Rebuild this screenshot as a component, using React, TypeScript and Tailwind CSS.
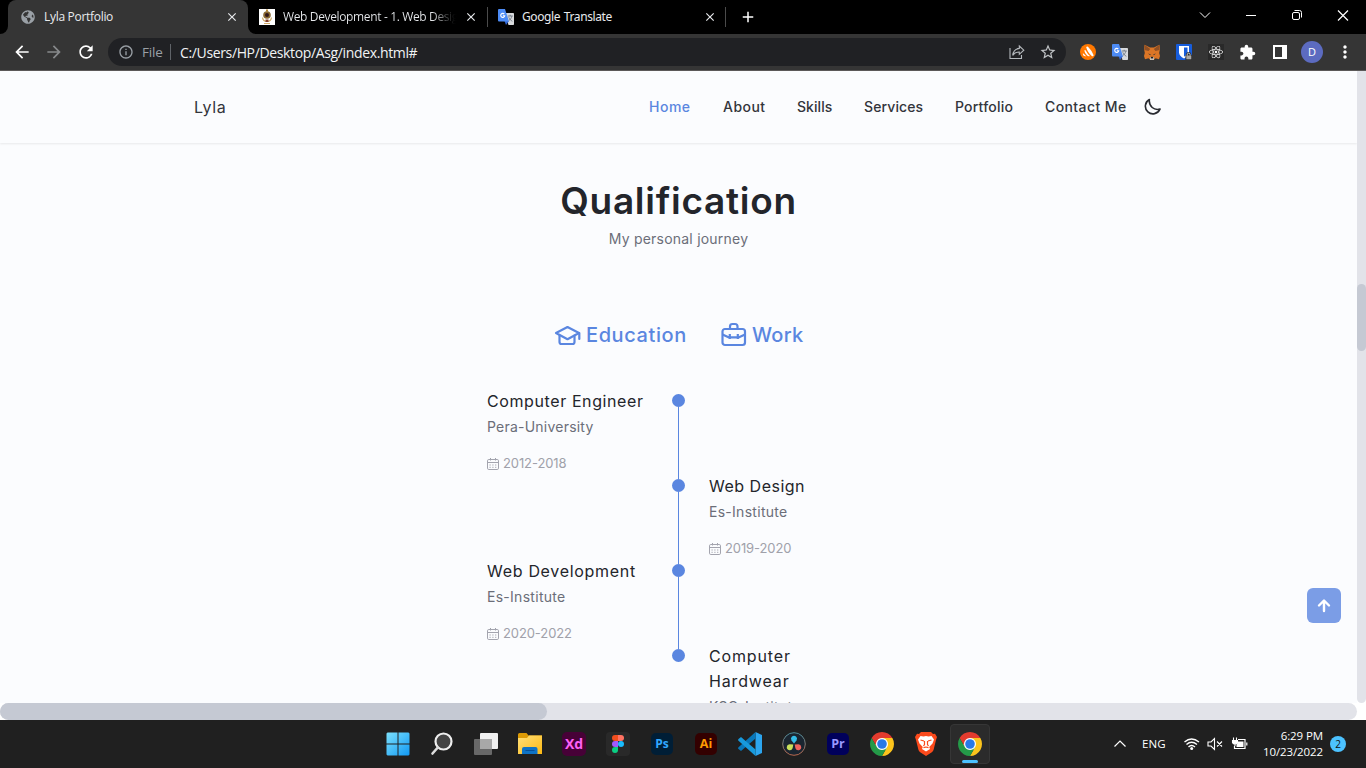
import React from "react";
import { FaGlobeAmericas, FaReact } from "react-icons/fa";
import { MdExtension, MdStarBorder, MdMoreVert, MdClose, MdAdd, MdArrowBack, MdArrowForward, MdRefresh, MdInfoOutline } from "react-icons/md";

function Translate() {
  return (
    <svg width="16" height="16" viewBox="0 0 16 16" className="shrink-0">
      <path d="M7 4h8.2q.8 0 .8.8v10.4q0 .8-.8.8H10.5z" fill="#d8dadd" />
      <path d="M8 16l3-4H6.500z" fill="#3367d6" />
      <path d="M1 0h6l4 12.5H1q-1 0-1-1V1q0-1 1-1z" fill="#4c8bf5" />
      <path d="M9.8 7h5M12.2 5.8V7M13.8 7.2c-.4 2-1.6 3.3-3 4.4M10.8 8.3c.7 1.6 1.8 2.9 3.5 4" stroke="#6c7480" strokeWidth=".9" fill="none" />
      <path d="M6.3 5.1a2 2 0 1 0 .4 1.7H4.9" stroke="#fff" strokeWidth="1.1" fill="none" />
    </svg>
  );
}

function Chrome() {
  return (
    <svg width="24" height="24" viewBox="0 0 48 48" className="shrink-0">
      <circle cx="24" cy="24" r="14" fill="#fff" />
      <path d="M24 12H44.78A24 24 0 0 0 3.22 12L13.61 30A12 12 0 0 1 24 12z" fill="#e33b2e" />
      <path d="M34.39 30L24 48A24 24 0 0 0 44.78 12H24A12 12 0 0 1 34.39 30z" fill="#fcc41c" />
      <path d="M13.61 30L3.22 12A24 24 0 0 0 24 48L34.39 30A12 12 0 0 1 13.61 30z" fill="#249a48" />
      <circle cx="24" cy="24" r="9.6" fill="#2979e8" />
    </svg>
  );
}

function Crest() {
  return (
    <svg width="16" height="16" viewBox="0 0 16 16" className="shrink-0">
      <path d="M0 0h16v16H0z" fill="#fff" />
      <path d="M7 .5h2v2H7z" fill="#b98a35" />
      <circle cx="8" cy="6" r="3.8" fill="#8a6a33" />
      <circle cx="8" cy="6" r="2" fill="#32181a" />
      <path d="M3.500 8.500q.5 4 4.500 4t4.500-4M5 14.500h6" stroke="#d0ab68" strokeWidth="1.200" fill="none" />
      <path d="M6.500 10.500h3v2.500h-3z" fill="#843f2c" />
    </svg>
  );
}

function TabBar() {
  return (
    <div className="flex h-[34px] bg-black text-[12px] text-[#e8eaed]">
      <div className="flex w-2 items-end bg-[#353535]"><div className="h-full w-full rounded-br-lg bg-black" /></div>
      <div className="flex w-[240px] items-center rounded-t-lg bg-[#353535] pl-3 pr-[9px]">
        <FaGlobeAmericas size={14} className="ml-px text-[#9aa0a6]" />
        <span className="ml-[9px] w-[180px] whitespace-nowrap tracking-[-0.3px]">Lyla Portfolio</span>
        <MdClose size={14} className="ml-auto" />
      </div>
      <div className="flex w-[239px] items-center bg-[#353535]">
        <div className="flex h-full w-full items-center rounded-bl-lg bg-black pl-[11px] pr-[9px]">
          <Crest />
          <span className="ml-2 w-[175px] overflow-hidden whitespace-nowrap bg-linear-to-r from-[#e8eaed] from-85% to-black bg-clip-text tracking-[-0.36px] text-transparent">Web Development - 1. Web Desig</span>
          <MdClose size={14} className="ml-auto" />
        </div>
      </div>
      <div className="mt-[7px] h-5 w-px bg-[#4b4b4b]" />
      <div className="flex w-[237px] items-center pl-[10px] pr-[8px]">
        <Translate />
        <span className="ml-2 whitespace-nowrap tracking-[-0.4px] [word-spacing:1px] font-['Noto_Sans',sans-serif]">Google Translate</span>
        <MdClose size={14} className="ml-auto" />
      </div>
      <div className="mt-[7px] h-5 w-px bg-[#4b4b4b]" />
      <div className="flex items-center pl-[13px]"><MdAdd size={18} className="text-white" /></div>
      <div className="ml-auto flex h-[29px] items-center text-white">
        <svg width="161" height="12" viewBox="0 0 161 12" className="mr-3" fill="none" stroke="currentColor" strokeWidth="1">
          <path d="M7 3.5l5 5 5-5" />
          <path d="M53 6.5h10" />
          <rect x="99.5" y="3.5" width="7" height="7" rx="1.5" />
          <path d="M101.5 1.5h5q2 0 2 2v5" />
          <path d="M145 1.5l10 10M155 1.5l-10 10" strokeWidth="1.2" />
        </svg>
      </div>
    </div>
  );
}

function Toolbar() {
  return (
    <div className="flex h-[37px] items-center border-b border-[#5b5858] bg-[#353535] text-white">
      <MdArrowBack size={20} className="ml-3" />
      <MdArrowForward size={20} className="ml-3 text-[#87898b]" />
      <MdRefresh size={20} className="ml-3" />
      <div className="ml-3 flex h-7 w-[958px] items-center rounded-full bg-[#202124] pl-[10px] pr-[9px] text-[14px]">
        <MdInfoOutline size={16} className="text-[#9aa0a6]" />
        <span className="ml-2 w-[21px] whitespace-nowrap text-[13.5px] tracking-[-0.2px] text-[#9aa0a6]">File</span>
        <div className="ml-[7px] h-4 w-px bg-[#5f6368]" />
        <span className="ml-[9px] whitespace-nowrap tracking-[-0.36px] text-[#f1f3f4]">C:/Users/HP/Desktop/Asg/index.html#</span>
        <svg width="16" height="16" viewBox="0 0 16 16" className="ml-auto" fill="none" stroke="#b4b8bc" strokeWidth="1.1">
          <path d="M1 4v10.5h11.5V11" />
          <path d="M10.3 2l4.5 4.2-4.5 4.1V8Q6 7.9 3.7 11.4 4.5 5 10.3 4.4z" />
        </svg>
        <MdStarBorder size={18} className="ml-[14px] text-[#c0c3c6]" />
      </div>
      <div className="ml-[14px] flex items-center gap-4">
        <svg width="16" height="16" viewBox="0 0 16 16">
          <circle cx="8" cy="8" r="8" fill="#ff7800" />
          <path d="M6.300 3.600Q6.500 2 8 2.800q3.500 3.500 5.500 8.200.3 1.700-1.500 1.200Q7.700 9 6.300 3.600z" fill="#fff" />
          <path d="M4.300 6.500q.8-1 1.600.2 1.500 3 4 5.300-1.500.6-2.800-.4Q4.800 9.500 4.300 6.500zM2.700 9.700q.8-.7 1.400.4.800 1.200 2.300 2.100Q3.200 13 2.700 9.700z" fill="#fff" />
        </svg>
        <Translate />
        <svg width="16" height="16" viewBox="0 0 16 16">
          <path d="M.6.7L6 3.5h4L15.4.7 16 5l-.8 4 .8 3-1 3.3-3.5-1L9.5 16h-3l-2-1.700-3.500 1L0 12l.8-3L0 5z" fill="#dc7626" />
          <path d="M.6.7L6.200 5 4.500 7 .3 6zM15.400.7L9.800 5l1.700 2 4.200-1z" fill="#8f5025" />
          <path d="M4 9.500l2.600.7-.3 1zM12 9.500l-2.600.7.3 1z" fill="#29313a" />
          <path d="M6 13h4v3H6z" fill="#cbc0b2" /><path d="M6.800 12.800h2.400v1.600H6.800z" fill="#222" />
        </svg>
        <svg width="16" height="16" viewBox="0 0 16 16">
          <rect width="16" height="16" rx="1" fill="#175ddc" />
          <path d="M3 2h10v6.500q-.2 3.700-5 6Q3.200 12.200 3 8.500z" fill="#fff" />
          <path d="M8 3.600h3.500v5Q11 11 8 12.700z" fill="#175ddc" />
          <path d="M9.500 16v-4.500q0-.8.700-.8 0-2.700 2.500-2.700t2.500 2.700q.8 0 .8.800V16z" fill="#2a2a2a" />
          <path d="M10.300 11.500h5V15.300h-5z" fill="#a8a8a8" />
          <path d="M11.300 11.500v-.8q0-1.600 1.400-1.600t1.400 1.600v.8" stroke="#ccc" fill="none" />
        </svg>
        <span className="flex size-4 items-center justify-center bg-[#292929]"><FaReact size={14} /></span>
        <MdExtension size={17} className="-ml-px" />
        <svg width="14" height="14" viewBox="0 0 14 14" className="ml-px"><path d="M0 0h14v14H0z" fill="#fff" /><path d="M2 2h7v10H2z" fill="#353535" /></svg>
        <span className="-ml-[2px] flex size-[22px] items-center justify-center rounded-full bg-[#5c6bc0] text-[11px]">D</span>
        <MdMoreVert size={20} className="-ml-[4px]" />
      </div>
    </div>
  );
}

function CalendarIcon() {
  return (
    <svg width="12" height="12" viewBox="0 0 12 12" className="-mt-px" fill="none" stroke="#a3a4ae" strokeWidth="1">
      <rect x=".5" y="1.500" width="11" height="10" rx="1.300" />
      <path d="M.5 4.500h11M3.500 0v2.500M8.500 0v2.500" />
      <path d="M2.500 7h7M2.500 9.300h7" strokeDasharray="1.200 1.600" />
    </svg>
  );
}

type EntryProps = { title: string; titleClass: string; place: string; placeClass: string; years: string };

function Entry({ title, titleClass, place, placeClass, years }: EntryProps) {
  return (
    <div>
      <h3 className={"text-[16px] leading-[25px] text-[#23252b] " + titleClass}>{title}</h3>
      <p className={"mt-px h-6 whitespace-nowrap text-[14px] leading-6 text-[#6b6e79] " + placeClass}>{place}</p>
      <div className="mt-[15px] flex h-5 items-center gap-1 text-[13px] tracking-[-0.1px] text-[#a0a1aa]">
        <CalendarIcon />
        <span className="whitespace-nowrap">{years}</span>
      </div>
    </div>
  );
}

const entries: (EntryProps & { side: "left" | "right" })[] = [
  { side: "left", title: "Computer Engineer", titleClass: "tracking-[0.6px]", place: "Pera-University", placeClass: "tracking-[0.22px]", years: "2012-2018" },
  { side: "right", title: "Web Design", titleClass: "tracking-[0.5px]", place: "Es-Institute", placeClass: "tracking-[0.28px]", years: "2019-2020" },
  { side: "left", title: "Web Development", titleClass: "tracking-[0.7px]", place: "Es-Institute", placeClass: "tracking-[0.28px]", years: "2020-2022" },
  { side: "right", title: "Computer Hardwear", titleClass: "w-[100px] tracking-[0.85px]", place: "KSC-Institute", placeClass: "tracking-[0.3px]", years: "2022-2023" },
];

function Page() {
  return (
    <div className="relative h-[632px] w-[1357px] overflow-hidden bg-[#fbfcfe] font-['Inter',sans-serif]">
      <header className="flex h-[72px] items-center pl-[194px] shadow-[0_1px_2px_rgba(0,0,0,0.08)]">
        <span className="w-[455px] text-[16px] tracking-[0.6px] text-[#33353b]">Lyla</span>
        <nav className="-mt-px flex gap-8 whitespace-nowrap text-[14px] font-medium text-[#33353b]">
          <span className="w-[42px] tracking-[0.5px] text-[#5a86e0]">Home</span>
          <span className="w-[42px] tracking-[0.45px]">About</span>
          <span className="w-[35px] tracking-[0.05px]">Skills</span>
          <span className="w-[59px] tracking-[0.12px]">Services</span>
          <span className="w-[58px] tracking-[0.2px]">Portfolio</span>
          <span className="w-[82px] tracking-[0.4px]">Contact Me</span>
        </nav>
        <svg width="18" height="18" viewBox="0 0 18 18" className="ml-4" fill="none" stroke="#292b31" strokeWidth="1.600" strokeLinejoin="round">
          <path d="M6.400 1.500A7.600 7.600 0 1 0 17 11.100Q12.400 12.300 9.200 9.500 5.700 6.300 6.400 1.500z" />
        </svg>
      </header>
      <main>
        <h1 className="mt-[31px] text-center text-[37px] leading-[54px] font-semibold tracking-[0.72px] text-[#23252b]">Qualification</h1>
        <p className="text-center text-[14px] leading-[21px] tracking-[0.22px] text-[#6b6e79]">My personal journey</p>
        <div className="mt-[73px] flex h-[26px] items-center pl-[554px] text-[20px] font-medium text-[#5a86e0]">
          <svg width="28" height="26" viewBox="0 0 28 26" fill="none" stroke="currentColor" strokeWidth="2.200" strokeLinejoin="round" strokeLinecap="round">
            <path d="M13.500 5L2 11l11.500 6.200L25 11z" />
            <path d="M5.500 13.500V20q0 2 2 2h11q2 0 2-2v-6.500M25.300 11v6" />
          </svg>
          <span className="ml-1 w-[135px] tracking-[0.6px]">Education</span>
          <svg width="26" height="26" viewBox="0 0 26 26" fill="none" stroke="currentColor" strokeWidth="2.200" strokeLinejoin="round">
            <rect x="1.500" y="7" width="22.500" height="16" rx="2.500" />
            <path d="M9 7V4.500Q9 2 11.500 2H14q2.500 0 2.500 2.500V7M1.500 12.500l6 2.800H18l6-2.800M8.800 12v5M16.800 12v5" />
          </svg>
          <span className="ml-[5px] tracking-[0.25px]">Work</span>
        </div>
        <div className="mt-[41px]">
          {entries.map((e) => (
            <div key={e.title} className="grid h-[85px] grid-cols-[185px_13px_130px] pl-[487px]">
              <div>{e.side === "left" && <Entry {...e} />}</div>
              <div className="flex flex-col items-center pt-[5px]">
                <span className="size-[13px] shrink-0 rounded-full bg-[#5a86e0]" />
                <span className={e.title === "Computer Hardwear" ? "hidden" : "-mb-[5px] w-px flex-1 bg-[#5a86e0]"} />
              </div>
              <div className="pl-6">{e.side === "right" && <Entry {...e} />}</div>
            </div>
          ))}
        </div>
      </main>
      <button className="absolute top-[517px] left-[1307px] flex h-[35px] w-[34px] items-center justify-center rounded-md bg-[#7b9de6]">
        <svg width="16" height="16" viewBox="0 0 16 16" fill="none" stroke="#fff" strokeWidth="2.400" strokeLinecap="round" strokeLinejoin="round"><path d="M8 13V3M3 7.500l5-5 5 5" /></svg>
      </button>
    </div>
  );
}

function AdobeIcon({ name, className }: { name: string; className: string }) {
  return <span className={"flex items-center justify-center rounded-[5px] leading-none font-bold " + className}>{name}</span>;
}

function Taskbar() {
  const cell = "flex w-11 items-center justify-center";
  return (
    <div className="flex h-12 bg-[#202020] pl-[376px] text-white">
      <div className={cell}>
        <svg width="24" height="24" viewBox="0 0 24 24">
          <defs><linearGradient id="win" x2="1" y2="1" gradientUnits="objectBoundingBox"><stop stopColor="#7ce0fc" /><stop offset="1" stopColor="#1199f4" /></linearGradient></defs>
          <path d="M1.500.5H11.500V11.500H.5v-10zM12.500.5h10l1 1v10h-11zM.5 12.500h11v11h-10l-1-1zM12.500 12.500h11v10l-1 1h-10z" fill="url(#win)" />
        </svg>
      </div>
      <div className={cell}>
        <svg width="24" height="24" viewBox="0 0 24 24" fill="none"><circle cx="13.500" cy="9.500" r="8" fill="#444" stroke="#eee" strokeWidth="2.200" /><path d="M7.800 15.500L2.500 21.500" stroke="#ddd" strokeWidth="2.600" strokeLinecap="round" /></svg>
      </div>
      <div className={cell}>
        <svg width="24" height="24" viewBox="0 0 24 24"><rect x="6" y="1" width="18" height="16" rx="1" fill="#f0f0f0" /><rect y="7" width="18" height="16" rx="1" fill="#686868" /><path d="M6 7h12v10H6z" fill="#a8a8a8" /></svg>
      </div>
      <div className={cell}>
        <svg width="24" height="24" viewBox="0 0 24 24">
          <path d="M0 2.500Q0 1 1.500 1h7l2 2.500H24V8H0z" fill="#dc9a05" />
          <defs><linearGradient id="folder" x2="1" y2="1"><stop stopColor="#ffe07a" /><stop offset="1" stopColor="#fdb913" /></linearGradient></defs>
          <path d="M0 6h9l2-2.500h13V22H0z" fill="url(#folder)" />
          <path d="M4 22v-5q0-2 2-2h11.500q2 0 2 2v5z" fill="#0f73c5" /><path d="M7.500 18.500h9" stroke="#064f98" />
        </svg>
      </div>
      <div className={cell}><AdobeIcon name="Xd" className="size-6 bg-[#470137] text-[14px] text-[#ff61f6]" /></div>
      <div className={cell}>
        <span className="flex size-6 items-center justify-center rounded bg-[#292929]">
          <svg width="12" height="18" viewBox="0 0 12 18"><path d="M6 0H3a3 3 0 0 0 0 6h3z" fill="#f24e1e" /><path d="M6 0h3a3 3 0 0 1 0 6H6z" fill="#ff7262" /><path d="M6 6H3a3 3 0 0 0 0 6h3z" fill="#a259ff" /><circle cx="9" cy="9" r="3" fill="#1abcfe" /><path d="M6 12H3a3 3 0 1 0 3 3z" fill="#0acf83" /></svg>
        </span>
      </div>
      <div className={cell}><AdobeIcon name="Ps" className="size-[22px] bg-[#001e36] text-[12px] text-[#31a8ff]" /></div>
      <div className={cell}><AdobeIcon name="Ai" className="size-[22px] bg-[#330000] text-[12.5px] text-[#ff9a00]" /></div>
      <div className={cell}>
        <svg width="24" height="24" viewBox="0 0 24 24"><path d="M17.500 0L24 3v18l-6.500 3z" fill="#2ca5ee" /><path d="M17.500 0v6.500L3 19 .5 17q-.8-.8 0-1.700z" fill="#0877b9" /><path d="M17.500 24v-6.500L3 5 .5 7q-.8.8 0 1.700z" fill="#189adc" /></svg>
      </div>
      <div className={cell}>
        <svg width="24" height="24" viewBox="0 0 24 24">
          <defs><linearGradient id="ring" x2="0" y2="1"><stop stopColor="#4b8c9b" /><stop offset="1" stopColor="#b7664c" /></linearGradient></defs>
          <circle cx="12" cy="12" r="11.300" fill="#1a2530" stroke="url(#ring)" />
          <path d="M12 11.500L9.500 8.500a3 3 0 1 1 5 0z" fill="#34bce8" />
          <path d="M11.300 12.500l-.7 3.800a3 3 0 1 1-3-4z" fill="#c8e05b" />
          <path d="M12.700 12.500l.7 3.800a3 3 0 1 0 3-4z" fill="#ef625c" />
        </svg>
      </div>
      <div className={cell}><AdobeIcon name="Pr" className="size-[22px] bg-[#00005b] text-[12.5px] text-[#9999ff]" /></div>
      <div className={cell}><Chrome /></div>
      <div className={cell}>
        <svg width="22" height="24" viewBox="0 0 22 24">
          <path d="M6 0h10l2 2 2-.2L22 5l-1 3-2.500 10q-.5 1.500-1.700 2.300L11 24l-5.800-3.700Q4 19.500 3.500 18L1 8 0 5l2-3.200L4 2z" fill="#fb4a1c" />
          <path d="M5.500 4l3 .5L11 4l2.500.5 3-.5 2.500 3.500-1.500 4-3.300 3.500.8 2L11 19.500 7 17l.8-2L4.500 11.500 3 7.500z" fill="#fff" />
          <path d="M5.500 8l3.500 1M16.500 8L13 9M9.500 9v3.500L8.500 14M12.500 9v3.500l1 1.500M8.500 15.700L11 15l2.500.7" stroke="#fb4a1c" strokeWidth="1.200" fill="none" />
        </svg>
      </div>
      <div className={cell}>
        <div className="flex h-10 w-10 flex-col items-center rounded border border-[#363636] bg-[#2b2b2b] pt-[7px]">
          <Chrome /><span className="mt-1 h-[3px] w-4 shrink-0 rounded-full bg-[#4cc2ff]" />
        </div>
      </div>
      <div className="ml-auto flex items-center pr-5 text-[11.5px]">
        <svg width="12" height="8" viewBox="0 0 12 8" fill="none" stroke="#fff" strokeWidth="1.200"><path d="M.5 6.500L6 1l5.500 5.500" /></svg>
        <span className="ml-4 w-[42px] tracking-[0.1px]">ENG</span>
        <svg width="64" height="16" viewBox="0 0 64 16" fill="none" stroke="#fff" strokeWidth="1.100">
          <path d="M.5 6q7-6 14.500 0M2.500 8.500q5-4.500 10.500 0M4.500 11q3-3 6.500 0" strokeWidth="1.400" /><circle cx="7.700" cy="12.500" r="1.500" fill="#fff" stroke="none" />
          <path d="M24 6h3l3.500-3.500v11L27 10h-3zM33 5.500l5 5M38 5.500l-5 5" />
          <path d="M54 3.500h7v9H50.500V10M62.800 6.500v3" strokeWidth="1.200" /><path d="M54 5.500h5.500v5.500H52.500V9z" fill="#fff" stroke="none" /><path d="M48.500 4.500h5v2q-.5 1.500-2.500 1.500t-2.500-1.500zM49.500 1.500v3M52.500 1.500v3M51 8v2" fill="#fff" />
        </svg>
        <div className="ml-[5px] w-[70px] text-right text-[11.500px] leading-4 tracking-[-0.1px] whitespace-nowrap"><div>6:29 PM</div><div>10/23/2022</div></div>
        <span className="ml-[7px] flex size-4 items-center justify-center rounded-full bg-[#4cc2ff] text-[10px] text-[#111]">2</span>
      </div>
    </div>
  );
}

export default function App() {
  return (
    <div className="h-[768px] w-[1366px] overflow-hidden bg-white font-['Open_Sans',sans-serif]">
      <TabBar />
      <Toolbar />
      <div className="flex">
        <Page />
        <div className="w-[9px] rounded-b-full bg-[#e2e3e9] pt-[213px]"><div className="h-[67px] rounded-full bg-[#c5c9d3]" /></div>
      </div>
      <div className="h-[17px] w-[1357px] rounded-full bg-[#e2e3e9]"><div className="h-full w-[547px] rounded-full bg-[#c5c9d3]" /></div>
      <Taskbar />
    </div>
  );
}
